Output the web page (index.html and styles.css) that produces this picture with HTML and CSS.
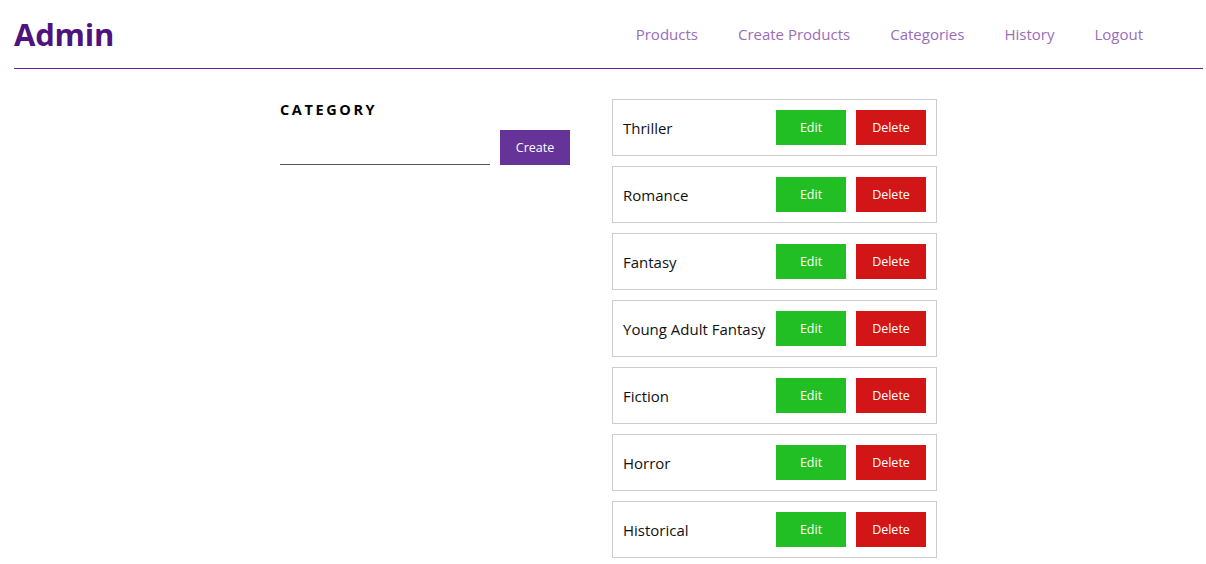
FILE: index.html
```html
<!DOCTYPE html>
<html lang="en">
<head>
<meta charset="utf-8">
<title>Admin</title>
<link rel="stylesheet" href="styles.css">
</head>
<body>
<header class="topbar">
  <h1 class="brand">Admin</h1>
  <nav class="nav">
    <a href="#">Products</a>
    <a href="#">Create Products</a>
    <a href="#">Categories</a>
    <a href="#">History</a>
    <a href="#">Logout</a>
  </nav>
</header>
<main class="main">
  <section class="form-col">
    <h2 class="form-title">CATEGORY</h2>
    <div class="form-row">
      <input class="field" type="text">
      <button class="btn btn-create">Create</button>
    </div>
  </section>
  <section class="list">
    <div class="item"><span class="name">Thriller</span><button class="btn btn-edit">Edit</button><button class="btn btn-delete">Delete</button></div>
    <div class="item"><span class="name">Romance</span><button class="btn btn-edit">Edit</button><button class="btn btn-delete">Delete</button></div>
    <div class="item"><span class="name">Fantasy</span><button class="btn btn-edit">Edit</button><button class="btn btn-delete">Delete</button></div>
    <div class="item"><span class="name">Young Adult Fantasy</span><button class="btn btn-edit">Edit</button><button class="btn btn-delete">Delete</button></div>
    <div class="item"><span class="name">Fiction</span><button class="btn btn-edit">Edit</button><button class="btn btn-delete">Delete</button></div>
    <div class="item"><span class="name">Horror</span><button class="btn btn-edit">Edit</button><button class="btn btn-delete">Delete</button></div>
    <div class="item"><span class="name">Historical</span><button class="btn btn-edit">Edit</button><button class="btn btn-delete">Delete</button></div>
  </section>
</main>
</body>
</html>
```
FILE: styles.css
```css
* { box-sizing: border-box; }
body {
  margin: 0;
  font-family: "Open Sans", "Noto Sans", sans-serif;
  color: #111;
  background: #fff;
}
.topbar {
  margin: 0 3px 0 14px;
  height: 69px;
  border-bottom: 1px solid #6f1fb0;
  display: flex;
  align-items: center;
  justify-content: space-between;
}
.brand {
  margin: 0;
  font-size: 31px;
  font-weight: 700;
  color: #4e137c;
  letter-spacing: -0.2px;
  line-height: 1;
  padding-top: 1px;
}
.nav {
  display: flex;
  gap: 40px;
  padding-right: 60px;
  margin-top: -1px;
}
.nav a {
  color: #9a6cba;
  text-decoration: none;
  font-size: 15px;
}
.main {
  display: flex;
  align-items: flex-start;
  margin-top: 30px;
  padding-left: 280px;
  gap: 42px;
}
.form-col {
  width: 290px;
}
.form-title {
  margin: 2px 0 0;
  font-size: 14.5px;
  font-weight: 700;
  letter-spacing: 2.6px;
  line-height: 18px;
  color: #000;
}
.form-row {
  display: flex;
  align-items: flex-end;
  margin-top: 11px;
}
.field {
  width: 210px;
  height: 35px;
  border: none;
  border-bottom: 1px solid #555;
  margin-right: 10px;
  outline: none;
  font: inherit;
}
.btn {
  width: 70px;
  height: 35px;
  border: none;
  color: #fff;
  font-family: "Open Sans", "Noto Sans", sans-serif;
  font-size: 12.5px;
  padding: 1px 0 0 0;
  line-height: 34px;
  cursor: pointer;
}
.btn-create { background: #663399; }
.btn-edit { background: #21be24; margin-right: 10px; }
.btn-delete { background: #d21517; }
.list {
  display: flex;
  flex-direction: column;
  gap: 10px;
  width: 325px;
}
.item {
  display: flex;
  align-items: center;
  border: 1px solid #cccccc;
  padding: 10px;
}
.name {
  flex: 1;
  font-size: 15px;
  color: #111;
}
```
